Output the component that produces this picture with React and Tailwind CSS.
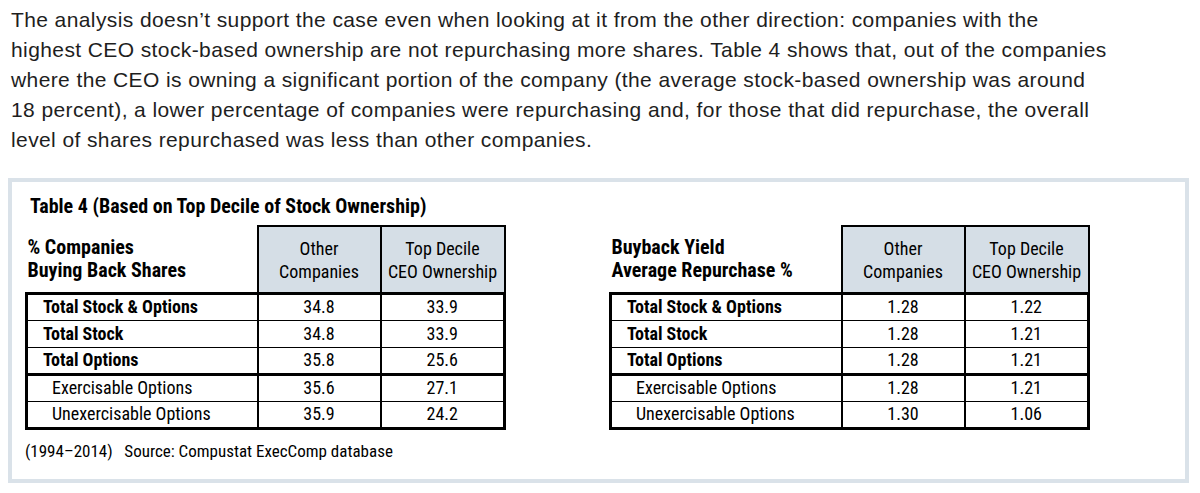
const cond = { fontFamily: '"Roboto Condensed", "Liberation Sans Narrow", "DejaVu Sans Condensed", "Liberation Sans", sans-serif' };

const leftRows = [
  ["Total Stock & Options", "34.8", "33.9", true],
  ["Total Stock", "34.8", "33.9", true],
  ["Total Options", "35.8", "25.6", true],
  ["Exercisable Options", "35.6", "27.1", false],
  ["Unexercisable Options", "35.9", "24.2", false],
];

const rightRows = [
  ["Total Stock & Options", "1.28", "1.22", true],
  ["Total Stock", "1.28", "1.21", true],
  ["Total Options", "1.28", "1.21", true],
  ["Exercisable Options", "1.28", "1.21", false],
  ["Unexercisable Options", "1.30", "1.06", false],
];

function DataTable({ title1, title2, rows }) {
  return (
    <table className="border-collapse text-[18px] text-black" style={cond}>
      <colgroup>
        <col className="w-[231px]" />
        <col className="w-[123px]" />
        <col className="w-[124px]" />
      </colgroup>
      <thead>
        <tr className="h-[67px]">
          <th className="text-left align-bottom font-bold text-[20px] leading-[23px] pb-[10px] pl-[1px]">
            {title1}
            <br />
            {title2}
          </th>
          <th className="bg-[#d5dee6] border-2 border-black font-normal leading-[23px] pt-[1px]">
            Other
            <br />
            Companies
          </th>
          <th className="bg-[#d5dee6] border-2 border-black font-normal leading-[23px] pt-[1px]">
            Top Decile
            <br />
            CEO Ownership
          </th>
        </tr>
      </thead>
      <tbody className="border-[3px] border-black">
        {rows.map(([label, a, b, bold], i) => (
          <tr
            key={label}
            className={`h-[27px] leading-[20px] ${i === 2 ? "border-b-[3px] border-black" : "border-b border-black"}`}
          >
            <td className={bold ? "font-bold pl-[15px]" : "pl-[24px]"}>{label}</td>
            <td className="text-center border-l-2 border-black">{a}</td>
            <td className="text-center border-l-2 border-black">{b}</td>
          </tr>
        ))}
      </tbody>
    </table>
  );
}

export default function App() {
  return (
    <div className="w-[1200px] h-[493px] bg-white overflow-hidden" style={{ fontFamily: '"Liberation Sans", Arial, sans-serif' }}>
      {/* Intro paragraph */}
      <div className="pl-[11px] pt-[5px] text-[21px] tracking-[0.4px] leading-[30px] text-[#1e1e1e] whitespace-nowrap">
        <div>The analysis doesn’t support the case even when looking at it from the other direction: companies with the</div>
        <div>highest CEO stock-based ownership are not repurchasing more shares. Table 4 shows that, out of the companies</div>
        <div>where the CEO is owning a significant portion of the company (the average stock-based ownership was around</div>
        <div>18 percent), a lower percentage of companies were repurchasing and, for those that did repurchase, the overall</div>
        <div>level of shares repurchased was less than other companies.</div>
      </div>

      {/* Table box */}
      <div className="ml-[8px] mt-[23px] w-[1181px] h-[305px] border-[4px] border-[#dae2e9] pl-[13px] pt-[11px]">
        <div className="text-[20px] font-bold leading-[26px] text-black pl-[5px]" style={cond}>
          Table 4 (Based on Top Decile of Stock Ownership)
        </div>
        <div className="flex gap-[103px] mt-[6px]">
          <DataTable title1="% Companies" title2="Buying Back Shares" rows={leftRows} />
          <DataTable title1="Buyback Yield" title2="Average Repurchase %" rows={rightRows} />
        </div>
        <div className="mt-[9px] text-[17px] leading-[24px] text-black" style={cond}>
          (1994–2014)&nbsp;&nbsp; Source: Compustat ExecComp database
        </div>
      </div>
    </div>
  );
}
